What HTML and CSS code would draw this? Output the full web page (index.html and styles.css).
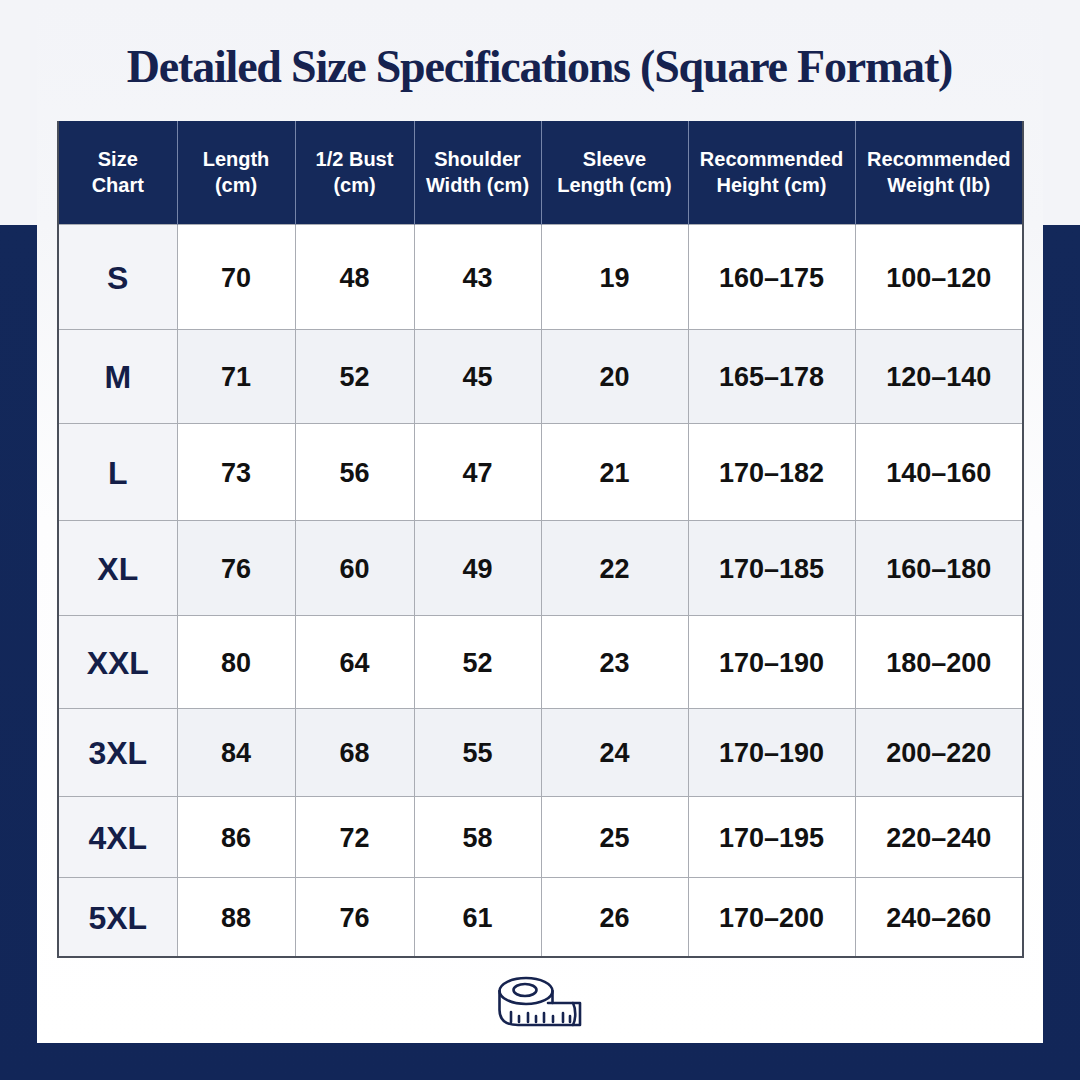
FILE: index.html
```html
<!DOCTYPE html>
<html lang="en">
<head>
<meta charset="utf-8">
<title>Detailed Size Specifications</title>
<link rel="stylesheet" href="styles.css">
</head>
<body>
<div class="page">
  <div class="card">
    <h1 class="title">Detailed Size Specifications (Square Format)</h1>
    <table class="chart">
      <colgroup>
        <col class="c1"><col class="c2"><col class="c3"><col class="c4"><col class="c5"><col class="c6"><col class="c7">
      </colgroup>
      <thead>
        <tr class="head">
          <th>Size<br>Chart</th>
          <th>Length<br>(cm)</th>
          <th>1/2 Bust<br>(cm)</th>
          <th>Shoulder<br>Width (cm)</th>
          <th>Sleeve<br>Length (cm)</th>
          <th>Recommended<br>Height (cm)</th>
          <th>Recommended<br>Weight (lb)</th>
        </tr>
      </thead>
      <tbody>
        <tr class="r1"><td class="size">S</td><td>70</td><td>48</td><td>43</td><td>19</td><td>160–175</td><td>100–120</td></tr>
        <tr class="r2 alt"><td class="size">M</td><td>71</td><td>52</td><td>45</td><td>20</td><td>165–178</td><td>120–140</td></tr>
        <tr class="r3"><td class="size">L</td><td>73</td><td>56</td><td>47</td><td>21</td><td>170–182</td><td>140–160</td></tr>
        <tr class="r4 alt"><td class="size">XL</td><td>76</td><td>60</td><td>49</td><td>22</td><td>170–185</td><td>160–180</td></tr>
        <tr class="r5"><td class="size">XXL</td><td>80</td><td>64</td><td>52</td><td>23</td><td>170–190</td><td>180–200</td></tr>
        <tr class="r6 alt"><td class="size">3XL</td><td>84</td><td>68</td><td>55</td><td>24</td><td>170–190</td><td>200–220</td></tr>
        <tr class="r7"><td class="size">4XL</td><td>86</td><td>72</td><td>58</td><td>25</td><td>170–195</td><td>220–240</td></tr>
        <tr class="r8"><td class="size">5XL</td><td>88</td><td>76</td><td>61</td><td>26</td><td>170–200</td><td>240–260</td></tr>
      </tbody>
    </table>
    <div class="icon-row">
      <svg class="tape" width="84" height="52" viewBox="0 0 84 52" fill="none" stroke="#16234f" stroke-width="2.6" stroke-linejoin="round" stroke-linecap="round">
        <ellipse cx="28" cy="15" rx="26.5" ry="13"/>
        <ellipse cx="27" cy="14" rx="11.5" ry="6"/>
        <path d="M1.5 15 V34 C1.5 44 8 49 20 49 H82 V27 H50"/>
        <path d="M54.5 15 V27"/>
        <path d="M75 27 C78 33 78 43 75 49"/>
        <path d="M13 36 V46 M21 40 V46 M30 37 V46 M38 40 V46 M46 37 V46 M55 40 V46 M65 37 V46 M72 40 V46"/>
      </svg>
    </div>
  </div>
</div>
</body>
</html>
```

FILE: styles.css
```css
html, body {
  margin: 0;
  padding: 0;
}

body {
  width: 1080px;
  height: 1080px;
  overflow: hidden;
  font-family: "Liberation Sans", Arial, sans-serif;
}

.page {
  width: 1080px;
  height: 1080px;
  background: linear-gradient(to bottom, #f3f4f8 0, #f3f4f8 225px, #13285a 225px, #122658 100%);
}

.card {
  margin: 0 37px;
  width: 1006px;
  height: 1043px;
  box-sizing: border-box;
  padding: 0 21px 0 20px;
  background: linear-gradient(to bottom, #f3f4f8 0, #f5f6f9 225px, #fdfdfe 520px, #ffffff 100%);
}

.title {
  margin: 0 0 24px 0;
  padding-top: 37px;
  line-height: 60px;
  font-family: "Liberation Serif", "Times New Roman", serif;
  font-weight: 700;
  font-size: 46px;
  letter-spacing: -1.2px;
  color: #16224f;
  text-align: center;
  white-space: nowrap;
}

.chart {
  width: 965px;
  border-collapse: collapse;
  table-layout: fixed;
  border: 2px solid #4a4f5a;
  border-top: none;
}

.c1 { width: 119px; }
.c2 { width: 118px; }
.c3 { width: 119px; }
.c4 { width: 127px; }
.c5 { width: 147px; }
.c6 { width: 167px; }
.c7 { width: 168px; }

.head {
  height: 103px;
  background: #15295a;
}

.head th {
  color: #ffffff;
  font-size: 20px;
  font-weight: 700;
  line-height: 26px;
  text-align: center;
  vertical-align: middle;
  padding: 0;
  border-left: 1.5px solid #7584a8;
}

.head th:first-child {
  border-left: none;
}

.chart td {
  text-align: center;
  vertical-align: middle;
  padding: 3px 0 0 0;
  font-size: 27px;
  font-weight: 700;
  color: #111111;
  background: #ffffff;
  border: 1.5px solid #a9acb3;
}

.chart tr.alt td {
  background: #f0f2f6;
}

.chart td.size,
.chart tr.alt td.size {
  background: #f3f4f8;
  color: #141e48;
  font-size: 32px;
}

.r1 { height: 105px; }
.r2 { height: 94px; }
.r3 { height: 97px; }
.r4 { height: 95px; }
.r5 { height: 93px; }
.r6 { height: 88px; }
.r7 { height: 81px; }
.r8 { height: 80px; }

.chart tbody tr:last-child td {
  border-bottom: 2px solid #4a4f5a;
}

.icon-row {
  display: flex;
  justify-content: center;
  padding-top: 18px;
}

.tape {
  display: block;
}
```
